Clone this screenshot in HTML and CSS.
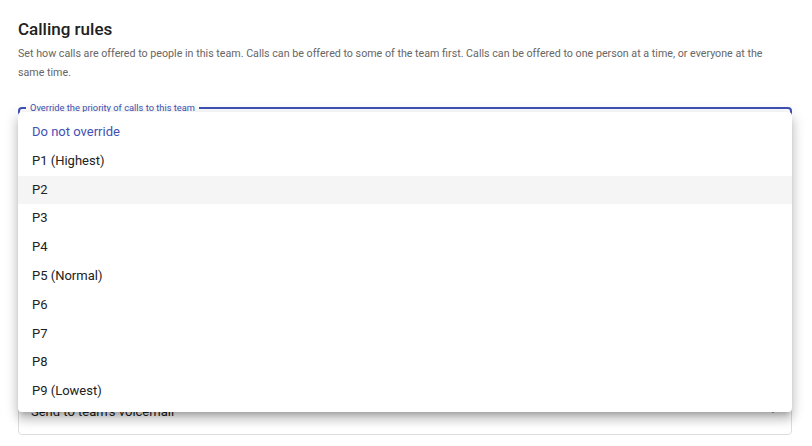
FILE: index.html
```html
<!DOCTYPE html>
<html lang="en">
<head>
  <meta charset="UTF-8" />
  <meta name="viewport" content="width=device-width, initial-scale=1.0"/>
  <title>Calling rules</title>
  <link rel="stylesheet" href="styles.css">
</head>
<body>

  <div class="page">
    <h2 class="title">Calling rules</h2>
    <p class="desc">Set how calls are offered to people in this team. Calls can be offered to some of the team first. Calls can be offered to one person at a time, or everyone at the same time.</p>

    <div class="select-wrap">
      <fieldset class="field focused">
        <legend>Override the priority of calls to this team</legend>
      </fieldset>

      <ul class="menu">
        <li class="selected">Do not override</li>
        <li>P1 (Highest)</li>
        <li class="hover">P2</li>
        <li>P3</li>
        <li>P4</li>
        <li>P5 (Normal)</li>
        <li>P6</li>
        <li>P7</li>
        <li>P8</li>
        <li>P9 (Lowest)</li>
      </ul>
    </div>

    <div class="spacer"></div>

    <fieldset class="field">
      <legend class="hidden-legend">When no one answers</legend>
      <div class="value">Send to team's voicemail</div>
      <span class="arrow"></span>
    </fieldset>
  </div>

</body>
</html>
```

FILE: styles.css
```css
body {
  margin: 0;
  background: #fff;
  font-family: Roboto, "Noto Sans", Arial, sans-serif;
  color: #212121;
}
.page {
  padding: 18px 20px 0 18px;
}
.title {
  margin: 0;
  font-size: 17px;
  font-weight: 500;
  line-height: 22px;
}
.desc {
  margin: 4px 0 0;
  max-width: 752px;
  font-size: 10.7px;
  line-height: 19px;
  color: #666;
}
.select-wrap {
  position: relative;
  margin-top: 21px;
}
.field {
  margin: 0;
  padding: 0 12px;
  height: 48px;
  box-sizing: border-box;
  border: 1px solid #ddd;
  border-radius: 4px;
  position: relative;
}
.field.focused {
  border: 2px solid #3f51b5;
}
.field legend {
  font-size: 9.3px;
  line-height: 10px;
  color: #3f51b5;
  padding: 0 4px;
  margin-left: -6px;
}
.field .hidden-legend {
  visibility: hidden;
}
.value {
  font-size: 13px;
  line-height: 30px;
}
.arrow {
  position: absolute;
  right: 14px;
  top: 12px;
  width: 0;
  height: 0;
  border-left: 4px solid transparent;
  border-right: 4px solid transparent;
  border-top: 4px solid #555;
}
.spacer {
  height: 236px;
}
.menu {
  position: absolute;
  top: 9px;
  left: 0;
  right: 0;
  margin: 0;
  padding: 6.1px 0;
  list-style: none;
  background: #fff;
  border-radius: 4px;
  box-shadow: 0 5px 5px -3px rgba(0,0,0,.2), 0 8px 10px 1px rgba(0,0,0,.14), 0 3px 14px 2px rgba(0,0,0,.12);
  z-index: 2;
}
.menu li {
  height: 28.8px;
  line-height: 28.8px;
  padding: 0 14px;
  font-size: 13px;
  color: #212121;
}
.menu li.selected {
  color: #3f51b5;
}
.menu li.hover {
  background: #f5f5f5;
}
```
